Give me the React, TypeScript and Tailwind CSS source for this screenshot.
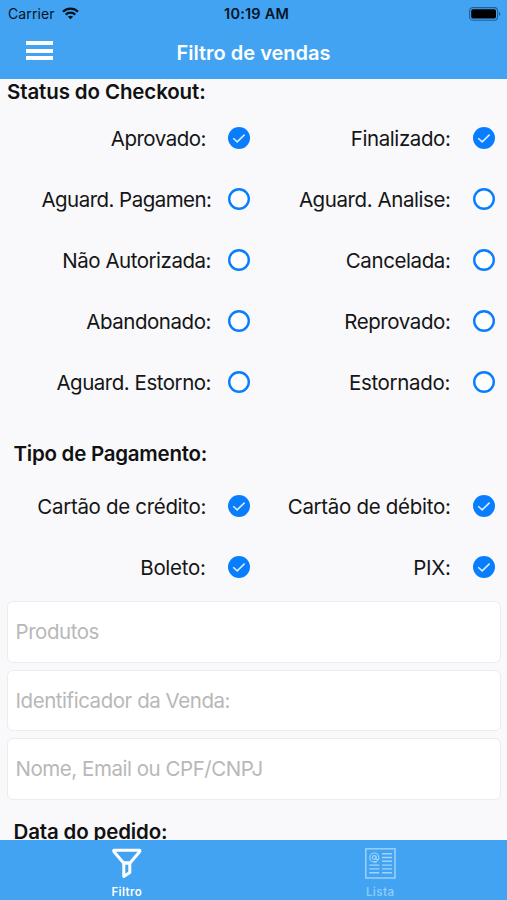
import { useState } from "react";

type Option = {
  id: string;
  label: string;
  checked: boolean;
  className: string;
};

const statusOptions: Option[] = [
  { id: "aprovado", label: "Aprovado:", checked: true, className: "mr-[22px] tracking-[-0.49px]" },
  { id: "finalizado", label: "Finalizado:", checked: true, className: "mr-[22px] tracking-[-0.4px]" },
  { id: "aguard-pagamen", label: "Aguard. Pagamen:", checked: false, className: "mr-[16.5px] tracking-[-0.53px]" },
  { id: "aguard-analise", label: "Aguard. Analise:", checked: false, className: "mr-[22px] tracking-[-0.42px]" },
  { id: "nao-autorizada", label: "Não Autorizada:", checked: false, className: "mr-[17px] tracking-[-0.48px]" },
  { id: "cancelada", label: "Cancelada:", checked: false, className: "mr-[22px] tracking-[-0.4px]" },
  { id: "abandonado", label: "Abandonado:", checked: false, className: "mr-[17px] tracking-[-0.45px]" },
  { id: "reprovado", label: "Reprovado:", checked: false, className: "mr-[22px] tracking-[-0.4px]" },
  { id: "aguard-estorno", label: "Aguard. Estorno:", checked: false, className: "mr-[17px] tracking-[-0.48px]" },
  { id: "estornado", label: "Estornado:", checked: false, className: "mr-[22.5px] tracking-[-0.33px]" },
];

const paymentOptions: Option[] = [
  { id: "credito", label: "Cartão de crédito:", checked: true, className: "mr-[22px] tracking-[-0.32px]" },
  { id: "debito", label: "Cartão de débito:", checked: true, className: "mr-[22px] tracking-[-0.3px]" },
  { id: "boleto", label: "Boleto:", checked: true, className: "mr-[22.5px] tracking-[-0.3px]" },
  { id: "pix", label: "PIX:", checked: true, className: "mr-[22px] tracking-[-0.3px]" },
];

const fields = ["Produtos", "Identificador da Venda:", "Nome, Email ou CPF/CNPJ"];

function WifiIcon() {
  return (
    <svg width="17" height="13" viewBox="0 0 17 13" fill="none" stroke="#06141f" strokeWidth="2.2">
      <path d="M1 4.7C5.2.6 11.8.6 16 4.7" />
      <path d="M3.7 7.6c2.7-2.6 6.9-2.6 9.6 0" />
      <path d="M8.5 12.3 5.9 9.7c1.5-1.4 3.7-1.4 5.2 0z" fill="#06141f" stroke="none" />
    </svg>
  );
}

function BatteryIcon() {
  return (
    <svg width="32" height="14" viewBox="0 0 32 14" fill="none">
      <rect x="0.6" y="0.6" width="28" height="12.6" rx="3.4" stroke="#235f92" strokeWidth="1.1" />
      <rect x="2.2" y="2.2" width="24.8" height="9.4" rx="1.8" fill="#000" />
      <path d="M30 4.8c1.7.6 1.7 3.6 0 4.2z" fill="#235f92" />
    </svg>
  );
}

function FunnelIcon() {
  return (
    <svg width="30" height="32" viewBox="0 0 30 32" fill="none" stroke="#fff" strokeWidth="3" strokeLinejoin="round">
      <path d="M1.8 3.2h26v1.3L18 16h-6.4L1.8 4.5z" />
      <path d="M11.8 16h6v9.4l-6 4z" />
    </svg>
  );
}

function NewsIcon() {
  return (
    <svg width="31" height="31" viewBox="0 0 31 31" fill="none" stroke="#a2d4fb">
      <rect x="0.8" y="0.8" width="29.2" height="29.2" strokeWidth="1.4" />
      <circle cx="9.3" cy="9.5" r="4.5" strokeWidth="1.2" />
      <circle cx="9.2" cy="9.5" r="1.8" strokeWidth="1.2" />
      <path d="M11 7.5v3.2c0 1 1.4 1.3 2.2.3M8 13.5l3.5.8" strokeWidth="1.2" />
      <path
        d="M17 5.7h10M17 9.5h10M17 13.3h10M17 17.1h10M17 20.9h10M17 24.8h10M4.3 17.1h10M4.3 20.9h10M4.3 24.8h10"
        strokeWidth="1.4"
      />
    </svg>
  );
}

function RadioMark({ checked }: { checked: boolean }) {
  return (
    <svg width="22" height="22" viewBox="0 0 22 22" fill="none" className="shrink-0">
      {checked ? (
        <>
          <circle cx="11" cy="11" r="11" fill="#087eff" />
          <path d="m5.2 11.3 4 3.6 7.4-7.3" stroke="#dcebff" strokeWidth="1.5" />
        </>
      ) : (
        <circle cx="11" cy="11" r="9.8" fill="#fff" stroke="#087eff" strokeWidth="2.4" />
      )}
    </svg>
  );
}

function OptionGrid({ options, onToggle }: { options: Option[]; onToggle: (id: string) => void }) {
  return (
    <div className="grid grid-cols-[250px_244.5px]">
      {options.map((option) => (
        <button
          key={option.id}
          type="button"
          role="checkbox"
          aria-checked={option.checked}
          onClick={() => onToggle(option.id)}
          className="flex h-[61px] items-center justify-end text-[20.5px] whitespace-nowrap text-[#151516]"
        >
          <span className={`pt-0.5 ${option.className}`}>{option.label}</span>
          <RadioMark checked={option.checked} />
        </button>
      ))}
    </div>
  );
}

export default function App() {
  const [status, setStatus] = useState(statusOptions);
  const [payment, setPayment] = useState(paymentOptions);

  const toggle = (list: Option[], id: string) =>
    list.map((option) => (option.id === id ? { ...option, checked: !option.checked } : option));

  return (
    <div className="flex h-[900px] w-[507px] flex-col overflow-hidden bg-[#f9f9fb] font-[Inter,'Liberation_Sans',sans-serif]">
      <header className="h-[79px] shrink-0 bg-[#41a3f2]">
        <div className="grid h-[27px] grid-cols-[1fr_auto_1fr] items-center pr-1.5 pl-3 text-[14px] text-[#06141f]">
          <div className="-ml-1 flex items-center gap-[7px]">
            <span className="tracking-[0.1px]">Carrier</span>
            <WifiIcon />
          </div>
          <span className="text-center text-[14.5px] font-semibold tracking-[0.2px]">10:19 AM</span>
          <div className="flex justify-end">
            <BatteryIcon />
          </div>
        </div>
        <div className="grid h-[51px] grid-cols-[1fr_auto_1fr] items-center">
          <button type="button" aria-label="Menu" className="mb-1 ml-[26px] flex w-[27px] flex-col gap-[3.5px]">
            <span className="h-1 bg-white" />
            <span className="h-1 bg-white" />
            <span className="h-1 bg-white" />
          </button>
          <h1 className="text-[20px] font-semibold text-white">Filtro de vendas</h1>
        </div>
      </header>

      <main className="flex-1 overflow-hidden">
        <h2 className="h-[28.5px] pl-[7px] text-[20.5px] leading-[26px] font-semibold tracking-[-0.12px] text-[#111]">
          Status do Checkout:
        </h2>
        <OptionGrid options={status} onToggle={(id) => setStatus((current) => toggle(current, id))} />
        <h2 className="h-[63px] pt-[28.5px] pl-[13.5px] text-[20.5px] leading-[26px] font-semibold tracking-[-0.25px] text-[#111]">
          Tipo de Pagamento:
        </h2>
        <OptionGrid options={payment} onToggle={(id) => setPayment((current) => toggle(current, id))} />
        <div className="mt-[3.5px] mr-1.5 ml-[7px] flex flex-col gap-[7px]">
          {fields.map((field) => (
            <input
              key={field}
              placeholder={field}
              className="h-[61.5px] w-full rounded-md border border-[#ececee] bg-white px-[7.5px] text-[20.5px] tracking-[-0.46px] outline-none placeholder:text-[#b8b8b8]"
            />
          ))}
        </div>
        <h2 className="mt-[19px] pl-[13.5px] text-[20.5px] leading-[26px] font-semibold tracking-[-0.15px] text-[#111]">
          Data do pedido:
        </h2>
      </main>

      <nav className="grid h-[60px] shrink-0 grid-cols-2 bg-[#41a3f2] text-[11.5px] font-semibold tracking-[0.4px]">
        <button type="button" className="flex flex-col items-center pt-[7px] text-white">
          <FunnelIcon />
          <span className="mt-[5px] leading-4">Filtro</span>
        </button>
        <button type="button" className="flex flex-col items-center pt-2 text-[#8bc9fa]">
          <NewsIcon />
          <span className="mt-[5px] leading-4">Lista</span>
        </button>
      </nav>
    </div>
  );
}
